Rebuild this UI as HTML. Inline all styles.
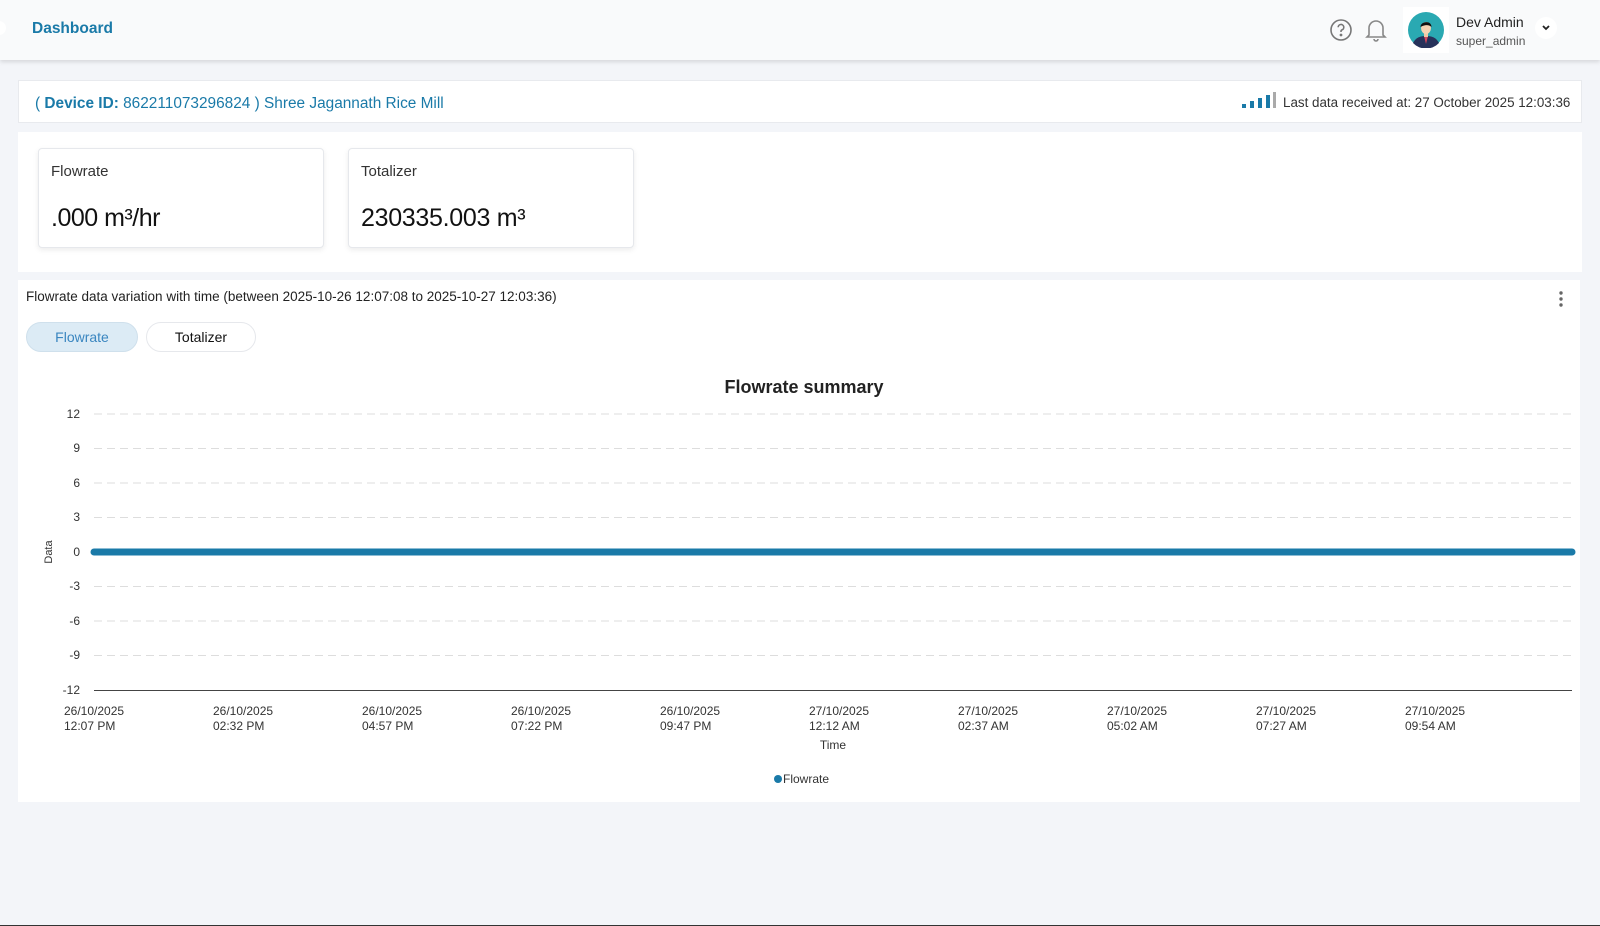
<!DOCTYPE html>
<html><head><meta charset="utf-8"><style>
*{box-sizing:border-box;margin:0;padding:0}
body{width:1600px;height:926px;background:#f3f5f9;font-family:"Liberation Sans",Arial,sans-serif;position:relative;overflow:hidden;color:#222}
.hdr{position:absolute;left:0;top:0;width:1600px;height:60px;background:#f9fafb;box-shadow:0 2px 4px rgba(0,0,0,.12)}
.abs{position:absolute}
.panel{position:absolute;background:#fff}
.card{position:absolute;background:#fff;border:1px solid #e6e8ec;border-radius:4px;box-shadow:0 2px 6px rgba(0,0,0,.08)}
</style></head><body>
<div class="hdr">
  <div class="abs" style="left:-8px;top:21px;width:14px;height:14px;border-radius:50%;background:#fff"></div>
  <div class="abs" style="left:32px;top:20px;font-size:15.5px;font-weight:bold;color:#1a7aa8">Dashboard</div>
  <svg class="abs" style="left:1329px;top:18px" width="24" height="24" viewBox="0 0 24 24" fill="none" stroke="#777" stroke-width="1.6"><circle cx="12" cy="12" r="10"/><path d="M9.2 9.3a2.8 2.8 0 1 1 3.8 2.6c-.7.3-1 .8-1 1.5v.6"/><circle cx="12" cy="17" r=".6" fill="#777"/></svg>
  <svg class="abs" style="left:1365px;top:18px" width="22" height="24" viewBox="0 0 22 24" fill="none" stroke="#888" stroke-width="1.6"><path d="M4 17V10a7 7 0 0 1 14 0v7l2 2H2z"/><path d="M9 21a2 2 0 0 0 4 0"/></svg>
  <div class="abs" style="left:1403px;top:7px;width:46px;height:46px;background:#fff"></div>
  <svg class="abs" style="left:1408px;top:12px" width="36" height="36" viewBox="0 0 36 36"><circle cx="18" cy="18" r="18" fill="#2aa9b2"/><path d="M5 31c3-6 8-7 13-7s10 1 13 7a18 18 0 0 1-26 0z" fill="#27325a"/><path d="M16 24h4l-2 8z" fill="#d9465a"/><rect x="16" y="20" width="4" height="5" fill="#f1c7a4"/><ellipse cx="18" cy="16" rx="5" ry="6" fill="#f6d2b2"/><path d="M12.5 15c0-6 11-7 11 0-2-2-6-3-11 0z" fill="#111"/></svg>
  <div class="abs" style="left:1456px;top:14px;font-size:14px;color:#222">Dev Admin</div>
  <div class="abs" style="left:1456px;top:34px;font-size:12px;color:#555">super_admin</div>
  <div class="abs" style="left:1535px;top:17px;width:22px;height:22px;border-radius:50%;background:#fff"></div>
  <svg class="abs" style="left:1541px;top:24px" width="10" height="8" viewBox="0 0 10 8" fill="none" stroke="#222" stroke-width="1.8"><path d="M2 2l3 3 3-3"/></svg>
</div>

<div class="panel" style="left:18px;top:80px;width:1564px;height:43px;border:1px solid #e8eaee">
  <div class="abs" style="left:16px;top:14px;font-size:15.4px;color:#1a7aa8">( <b>Device ID:</b> 862211073296824 ) Shree Jagannath Rice Mill</div>
  <svg class="abs" style="left:1222px;top:11px" width="36" height="18"><rect x="1" y="12" width="4" height="4" fill="#1a7aa8"/><rect x="9" y="9" width="4" height="7" fill="#1a7aa8"/><rect x="17" y="6" width="4" height="10" fill="#1a7aa8"/><rect x="25" y="3" width="4" height="13" fill="#1a7aa8"/><rect x="32" y="0" width="3" height="16" fill="#aaa"/></svg>
  <div class="abs" style="left:1264px;top:14px;font-size:13.4px;color:#333">Last data received at: 27 October 2025 12:03:36</div>
</div>

<div class="panel" style="left:18px;top:132px;width:1564px;height:140px">
  <div class="card" style="left:20px;top:16px;width:286px;height:100px">
    <div class="abs" style="left:12px;top:14px;font-size:15px;color:#333">Flowrate</div>
    <div class="abs" style="left:12px;top:55px;font-size:25px;color:#111;letter-spacing:-0.5px">.000 m³/hr</div>
  </div>
  <div class="card" style="left:330px;top:16px;width:286px;height:100px">
    <div class="abs" style="left:12px;top:14px;font-size:15px;color:#333">Totalizer</div>
    <div class="abs" style="left:12px;top:55px;font-size:25px;color:#111;letter-spacing:-0.3px">230335.003 m³</div>
  </div>
</div>

<div class="panel" style="left:18px;top:280px;width:1562px;height:522px">
  <div class="abs" style="left:8px;top:9px;font-size:13.5px;color:#222">Flowrate data variation with time (between 2025-10-26 12:07:08 to 2025-10-27 12:03:36)</div>
  <svg class="abs" style="left:1538px;top:10px" width="10" height="18"><circle cx="5" cy="3" r="1.7" fill="#666"/><circle cx="5" cy="9" r="1.7" fill="#666"/><circle cx="5" cy="15" r="1.7" fill="#666"/></svg>
  <div class="abs" style="left:8px;top:42px;width:112px;height:30px;border-radius:15px;background:#dcebf5;border:1px solid #cfe0ec;color:#3a86c0;font-size:14px;text-align:center;line-height:28px">Flowrate</div>
  <div class="abs" style="left:128px;top:42px;width:110px;height:30px;border-radius:15px;background:#fff;border:1px solid #e6e8ec;color:#111;font-size:14px;text-align:center;line-height:28px">Totalizer</div>
</div>

<svg class="abs" style="left:0;top:0" width="1600" height="926" font-family="Liberation Sans, Arial, sans-serif">
  <text x="804" y="393" font-size="18" font-weight="bold" text-anchor="middle" fill="#222">Flowrate summary</text>
  <g stroke="#ddd" stroke-dasharray="8 5" stroke-width="1">
    <line x1="94" y1="414" x2="1572" y2="414"/><line x1="94" y1="448.5" x2="1572" y2="448.5"/><line x1="94" y1="483" x2="1572" y2="483"/><line x1="94" y1="517.5" x2="1572" y2="517.5"/>
    <line x1="94" y1="586.5" x2="1572" y2="586.5"/><line x1="94" y1="621" x2="1572" y2="621"/><line x1="94" y1="655.5" x2="1572" y2="655.5"/>
  </g>
  <line x1="94" y1="690.5" x2="1572" y2="690.5" stroke="#444" stroke-width="1"/>
  <line x1="94" y1="552" x2="1572" y2="552" stroke="#1a7aa8" stroke-width="7" stroke-linecap="round"/>
  <g font-size="12" fill="#333" text-anchor="end">
    <text x="80" y="418">12</text><text x="80" y="452">9</text><text x="80" y="487">6</text><text x="80" y="521">3</text><text x="80" y="556">0</text><text x="80" y="590">-3</text><text x="80" y="625">-6</text><text x="80" y="659">-9</text><text x="80" y="694">-12</text>
  </g>
  <text transform="translate(52,552) rotate(-90)" font-size="11" fill="#333" text-anchor="middle">Data</text>
  <g font-size="12" fill="#333">
    <text x="64" y="715">26/10/2025</text><text x="64" y="730">12:07 PM</text>
    <text x="213" y="715">26/10/2025</text><text x="213" y="730">02:32 PM</text>
    <text x="362" y="715">26/10/2025</text><text x="362" y="730">04:57 PM</text>
    <text x="511" y="715">26/10/2025</text><text x="511" y="730">07:22 PM</text>
    <text x="660" y="715">26/10/2025</text><text x="660" y="730">09:47 PM</text>
    <text x="809" y="715">27/10/2025</text><text x="809" y="730">12:12 AM</text>
    <text x="958" y="715">27/10/2025</text><text x="958" y="730">02:37 AM</text>
    <text x="1107" y="715">27/10/2025</text><text x="1107" y="730">05:02 AM</text>
    <text x="1256" y="715">27/10/2025</text><text x="1256" y="730">07:27 AM</text>
    <text x="1405" y="715">27/10/2025</text><text x="1405" y="730">09:54 AM</text>
  </g>
  <text x="833" y="749" font-size="12" fill="#333" text-anchor="middle">Time</text>
  <circle cx="778" cy="779" r="4" fill="#1a7aa8"/>
  <text x="783" y="783" font-size="12" fill="#333">Flowrate</text>
  <line x1="0" y1="925.5" x2="1600" y2="925.5" stroke="#333" stroke-width="1"/>
</svg>
</body></html>
